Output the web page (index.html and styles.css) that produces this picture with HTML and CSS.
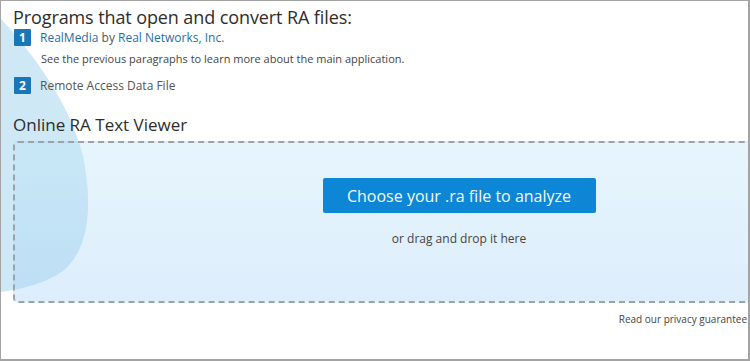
FILE: index.html
```html
<!DOCTYPE html>
<html>
<head>
<meta charset="utf-8">
<link rel="stylesheet" href="styles.css">
</head>
<body>
<div class="frame">
  <svg class="blob" width="100" height="300" viewBox="0 0 100 300"><path d="M-10,14 L0,18 C30,50 68,100 82,155 C90,195 92,245 62,270 C42,284 14,290 -10,292 Z" fill="#cfe8f6"/></svg>
  <div class="content">
    <h1 class="title">Programs that open and convert RA files:</h1>
    <ol class="programs">
      <li class="program">
        <span class="badge">1</span>
        <div class="program-body">
          <div class="program-name"><a class="link" href="#">RealMedia</a> by <a class="link" href="#">Real Networks, Inc.</a></div>
          <div class="program-note">See the previous paragraphs to learn more about the main application.</div>
        </div>
      </li>
      <li class="program">
        <span class="badge">2</span>
        <div class="program-body">
          <div class="program-name plain">Remote Access Data File</div>
        </div>
      </li>
    </ol>
    <h2 class="viewer-title">Online RA Text Viewer</h2>
    <div class="dropzone">
      <button class="choose">Choose your .ra file to analyze</button>
      <div class="drag">or drag and drop it here</div>
    </div>
    <div class="privacy">Read our privacy guarantee</div>
  </div>
</div>
</body>
</html>
```
FILE: styles.css
```css
html, body {
  margin: 0;
  padding: 0;
  background: #ffffff;
}
body {
  font-family: "Open Sans", "Noto Sans", sans-serif;
  color: #333;
}
.frame {
  position: relative;
  width: 747px;
  height: 358px;
  border: 1px solid #a3a3a3;
  border-right-width: 2px;
  border-bottom-width: 2px;
  overflow: hidden;
}
.blob {
  position: absolute;
  left: 0;
  top: 0;
  z-index: 0;
}
.content {
  position: relative;
  z-index: 1;
  padding: 4px 0 0 12px;
}
.title {
  margin: 0;
  font-size: 18px;
  font-weight: 400;
  line-height: 24px;
  color: #2d2d2d;
  letter-spacing: -0.1px;
}
.programs {
  list-style: none;
  margin: 0;
  padding: 0;
  display: flex;
  flex-direction: column;
  gap: 11px;
}
.program {
  display: flex;
  gap: 9px;
  padding-left: 1px;
}
.badge {
  flex: none;
  width: 17px;
  height: 17px;
  background: #1877b9;
  color: #fff;
  font-size: 12px;
  font-weight: 700;
  line-height: 17px;
  text-align: center;
  border-radius: 1px;
}
.program-name {
  font-size: 12px;
  line-height: 17px;
  color: #555;
}
.link {
  color: #1f6fa6;
  text-decoration: none;
}
.program-note {
  font-size: 11px;
  line-height: 15px;
  margin-top: 5px;
  padding-left: 1px;
  color: #444;
}
.viewer-title {
  margin: 20px 0 0 0;
  font-size: 17px;
  font-weight: 400;
  line-height: 22px;
  color: #2d2d2d;
}
.dropzone {
  margin-top: 5px;
  width: 892px;
  height: 162px;
  border: 2px dashed #9aa3a8;
  border-radius: 5px;
  background: linear-gradient(to bottom, rgba(190,230,248,0.38), rgba(160,205,245,0.36));
  display: flex;
  flex-direction: column;
  align-items: center;
  padding-top: 35px;
  box-sizing: border-box;
}
.choose {
  width: 273px;
  height: 35px;
  background: #0d86d5;
  color: #f2f9ff;
  border: none;
  border-radius: 2px;
  font-family: "Open Sans", "Noto Sans", sans-serif;
  font-size: 16px;
  padding: 0;
}
.drag {
  margin-top: 17px;
  font-size: 12px;
  line-height: 17px;
  color: #444;
}
.privacy {
  font-size: 10px;
  line-height: 14px;
  color: #444;
  text-align: right;
  margin-top: 9px;
  padding-right: 1px;
}
```
